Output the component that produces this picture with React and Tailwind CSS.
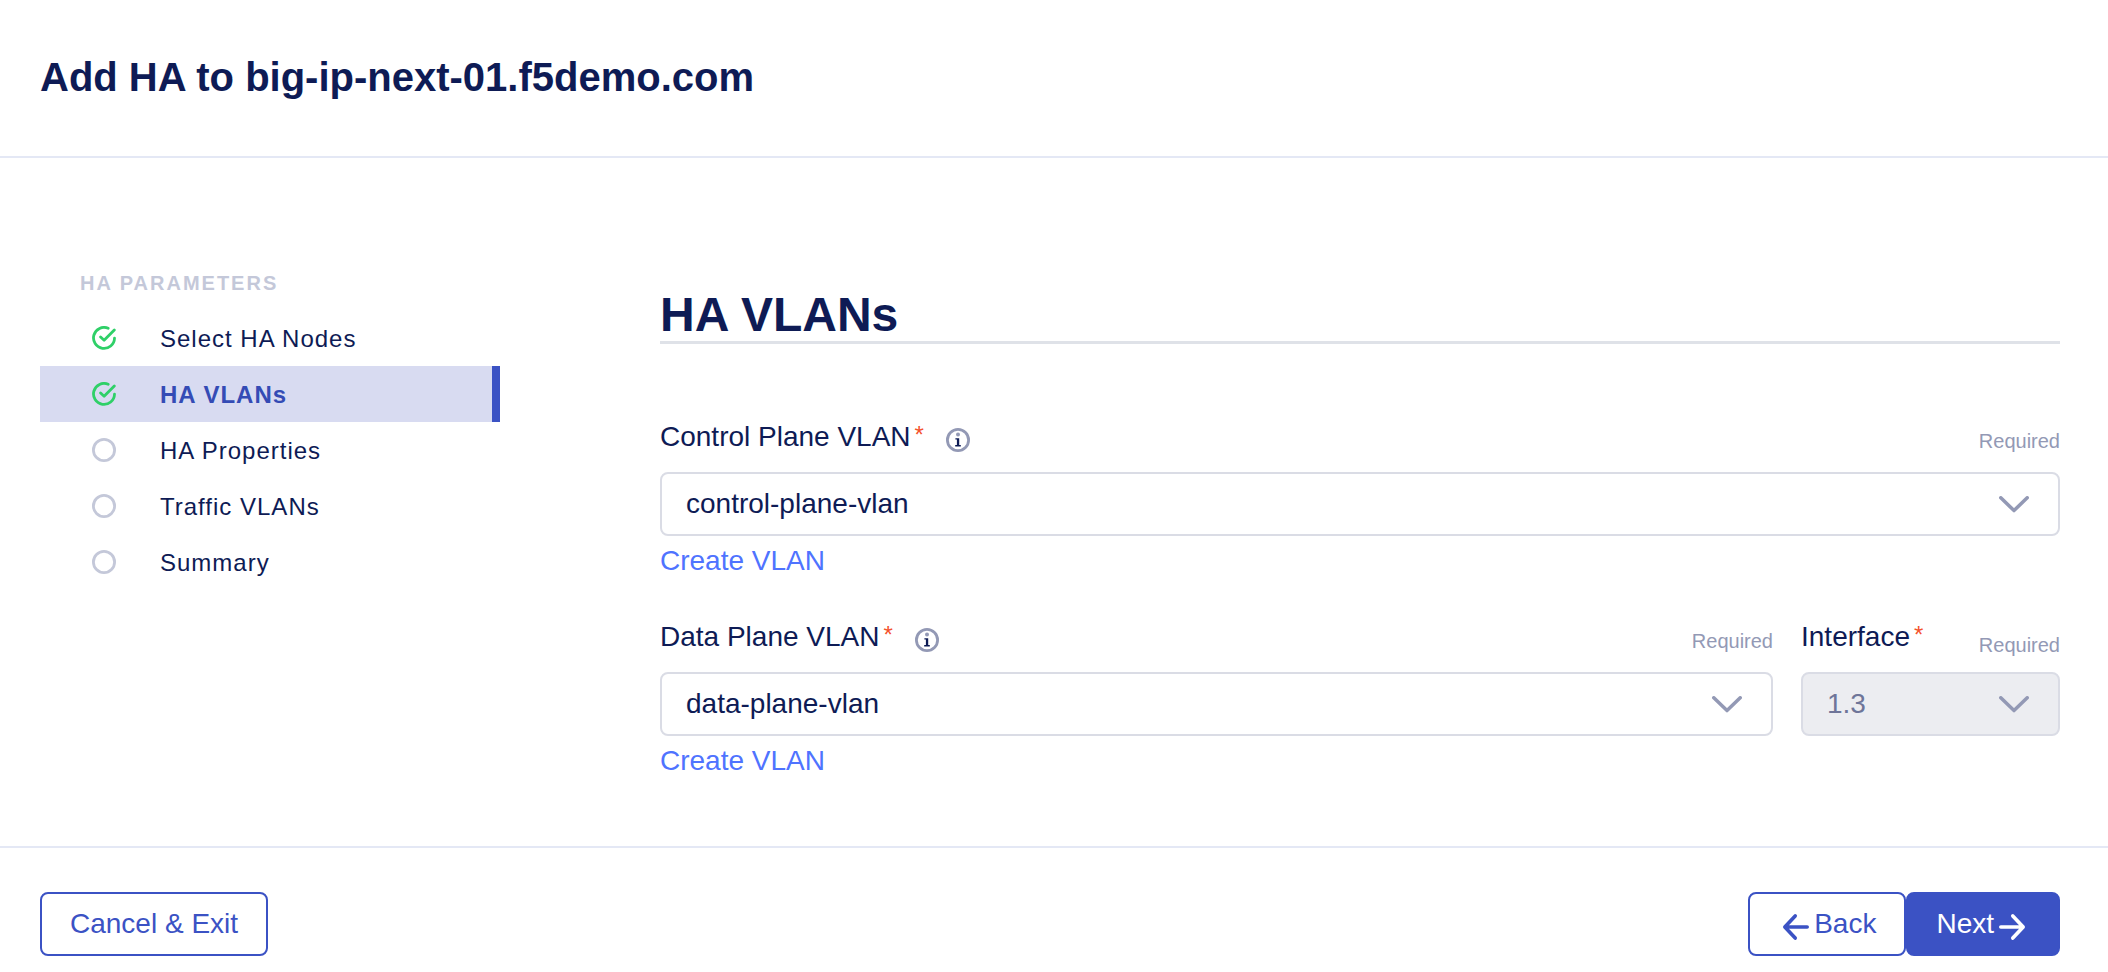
import React, { useState } from "react";

const steps = [
  { label: "Select HA Nodes", done: true },
  { label: "HA VLANs", done: true },
  { label: "HA Properties", done: false },
  { label: "Traffic VLANs", done: false },
  { label: "Summary", done: false },
];

function DoneIcon() {
  return (
    <svg className="size-6" viewBox="0 0 24 24" fill="none" stroke="#2fd068" strokeWidth="2.8" strokeLinecap="round" strokeLinejoin="round" aria-hidden="true">
      <path d="M16.2 2.3A10.5 10.5 0 1 0 22.5 12.2" />
      <path d="M8.6 11l3.5 3.2L22.3 4" />
    </svg>
  );
}

function PendingIcon() {
  return (
    <svg className="size-6" viewBox="0 0 24 24" fill="none" stroke="#c4c8d9" strokeWidth="2.8" aria-hidden="true">
      <circle cx="12" cy="12" r="10.6" />
    </svg>
  );
}

function InfoIcon() {
  return (
    <svg className="size-6" viewBox="0 0 24 24" fill="none" aria-hidden="true">
      <circle cx="12" cy="12" r="10.6" stroke="#9399b5" strokeWidth="2.8" />
      <circle cx="12" cy="6.4" r="2" fill="#9399b5" />
      <path d="M9.4 10.2h3.8v6.8h1.6v1.4H9.2V17h1.7v-5.4H9.4z" fill="#0e1b55" />
    </svg>
  );
}

function ArrowIcon({ back }) {
  return (
    <svg className="mt-1.5 size-7" viewBox="0 0 28 28" fill="none" stroke="currentColor" strokeWidth="3.6" strokeLinecap="round" strokeLinejoin="round" aria-hidden="true">
      {back ? <path d="M25.2 14H3.4M13.2 2.9L2.8 14l10.4 11.1" /> : <path d="M2.8 14h21.8M14.8 2.9L25.2 14 14.8 25.1" />}
    </svg>
  );
}

function LabelRow({ id, label, info, low }) {
  return (
    <div className="flex min-h-11 items-start justify-between">
      <div className="flex items-start">
        <label htmlFor={id} className="flex text-[28px] leading-[42px]">
          {label}
          <span className="ml-1 text-2xl leading-[38px] text-[#f4522d]">*</span>
        </label>
        {info && (
          <button type="button" aria-label={"About " + label} className="mt-3 ml-[22px]">
            <InfoIcon />
          </button>
        )}
      </div>
      <span className={low ? "pt-3.5 text-xl leading-[30px] text-[#9399b5]" : "pt-2.5 text-xl leading-[30px] text-[#9399b5]"}>Required</span>
    </div>
  );
}

function SelectBox({ id, value, disabled }) {
  return (
    <div className="relative mt-3">
      <select
        id={id}
        disabled={disabled}
        className="block h-16 w-full appearance-none rounded-lg border-2 border-[#dadce5] bg-white px-6 text-[28px] leading-9 text-[#0e1b55] disabled:bg-[#ecedf1] disabled:text-[#6e7599] disabled:opacity-100"
      >
        <option>{value}</option>
      </select>
      <svg className="pointer-events-none absolute top-6 right-[30px] h-[17px] w-8" viewBox="0 0 32 17" fill="none" stroke="#9399b5" strokeWidth="3.5" strokeLinecap="round" strokeLinejoin="round" aria-hidden="true">
        <path d="M2.8 1.8L16 14.6 29.2 1.8" />
      </svg>
    </div>
  );
}

function CreateLink() {
  return (
    <a href="#create-vlan" className="mt-1 block w-fit text-[28px] leading-[42px] text-[#4f73ff]">
      Create VLAN
    </a>
  );
}

export default function App() {
  const [active, setActive] = useState(1);
  return (
    <div className="flex min-h-screen flex-col bg-white font-['Liberation_Sans',Arial,sans-serif] text-[#0e1b55]">
      <header className="border-b-2 border-[#e4e8f5] px-10 pt-[53px] pb-[55px]">
        <h1 className="text-[40px] leading-[48px] font-bold">Add HA to big-ip-next-01.f5demo.com</h1>
      </header>

      <div className="flex flex-1 gap-40 pr-12 pl-10">
        <nav aria-label="HA parameters" className="w-[460px] shrink-0 pt-[110px]">
          <h2 className="pl-10 text-xl leading-[30px] font-bold tracking-[2px] text-[#c4c8d9] uppercase">HA Parameters</h2>
          <ul className="mt-3">
            {steps.map((s, i) => (
              <li key={s.label}>
                <button
                  type="button"
                  onClick={() => setActive(i)}
                  aria-current={i === active ? "step" : undefined}
                  className={
                    i === active
                      ? "flex h-14 w-full items-center border-r-8 border-[#3b52c4] bg-[#d8dbf1] pl-[52px] text-2xl font-bold tracking-[1px] text-[#344bb5]"
                      : "flex h-14 w-full items-center pl-[52px] text-2xl tracking-[1px]"
                  }
                >
                  {s.done ? <DoneIcon /> : <PendingIcon />}
                  <span className="ml-11 pt-0.5">{s.label}</span>
                </button>
              </li>
            ))}
          </ul>
        </nav>

        <main className="min-w-0 flex-1 pt-[130px] pb-16">
          <h2 className="border-b-[3px] border-[#dfe2e8] text-[48px] leading-[53px] font-bold">HA VLANs</h2>
          <form id="vlan-form" onSubmit={(e) => e.preventDefault()}>
            <div className="mt-[72px]">
              <LabelRow id="control-vlan" label="Control Plane VLAN" info />
              <SelectBox id="control-vlan" value="control-plane-vlan" />
              <CreateLink />
            </div>
            <div className="mt-[34px] flex gap-7">
              <div className="min-w-0 flex-1">
                <LabelRow id="data-vlan" label="Data Plane VLAN" info />
                <SelectBox id="data-vlan" value="data-plane-vlan" />
                <CreateLink />
              </div>
              <div className="w-[259px]">
                <LabelRow id="interface" label="Interface" low />
                <SelectBox id="interface" value="1.3" disabled />
              </div>
            </div>
          </form>
        </main>
      </div>

      <footer className="flex justify-between border-t-2 border-[#e4e8f5] pt-11 pr-12 pb-4 pl-10 text-[28px] leading-9">
        <button type="button" className="h-16 rounded-lg border-2 border-[#3b52c4] px-7 text-[#3b52c4]">
          Cancel &amp; Exit
        </button>
        <div className="flex">
          <button type="button" className="flex h-16 items-center gap-1 rounded-lg border-2 border-[#3b52c4] pr-7 pl-8 text-[#3b52c4]">
            <ArrowIcon back />
            Back
          </button>
          <button type="submit" form="vlan-form" className="flex h-16 items-center gap-1 rounded-lg border-2 border-[#3b52c4] bg-[#3b52c4] pr-8 pl-7 text-white">
            Next
            <ArrowIcon />
          </button>
        </div>
      </footer>
    </div>
  );
}
